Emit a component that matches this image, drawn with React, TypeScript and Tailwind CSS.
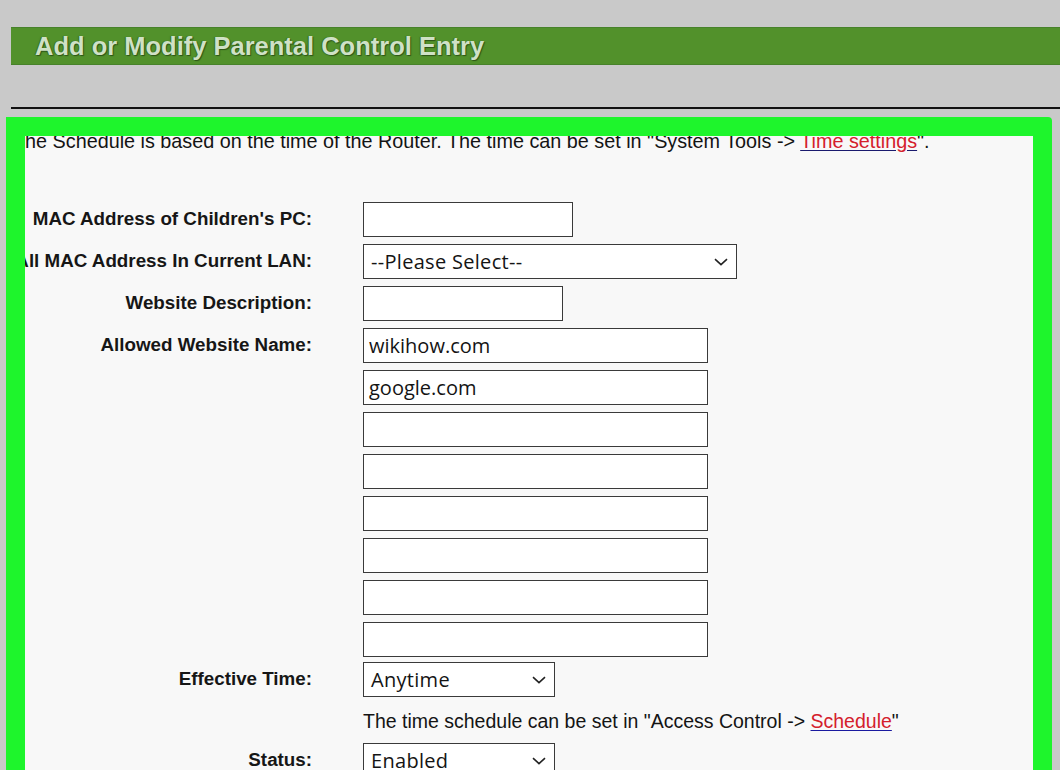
import React from "react";

const LABEL = "font-['Liberation_Sans',Arial,sans-serif] font-bold text-[18.8px] text-[#161616] whitespace-nowrap";
const FIELD = "font-['Open_Sans','Noto_Sans',sans-serif] text-[20px] text-[#141414]";

const ALLOWED_SITES = ["wikihow.com", "google.com", "", "", "", "", "", ""];

function Chevron() {
  return (
    <svg width="14" height="8" viewBox="0 0 14 8" className="shrink-0">
      <path d="M1 1.2 L7 6.6 L13 1.2" fill="none" stroke="#222" strokeWidth="1.6" />
    </svg>
  );
}

function TextBox({ width, value = "" }: { width: string; value?: string }) {
  return (
    <div className={`${width} h-[35px] border border-[#3a3a3a] bg-white flex items-center pl-[5px] ${FIELD}`}>
      {value}
    </div>
  );
}

function DropDown({ width, value }: { width: string; value: string }) {
  return (
    <div className={`${width} h-[35px] border border-[#3a3a3a] bg-white flex items-center justify-between pl-[7px] pr-[8px] ${FIELD}`}>
      <span className="tracking-[0.3px]">{value}</span>
      <Chevron />
    </div>
  );
}

function Row({ label, className = "", children }: { label?: string; className?: string; children: React.ReactNode }) {
  return (
    <div className={`flex items-start gap-x-[51px] ${className}`}>
      <div className={`w-[287px] h-[35px] flex items-center justify-end ${LABEL}`}>{label}</div>
      <div className="flex flex-col gap-y-[7px]">{children}</div>
    </div>
  );
}

export default function App() {
  return (
    <div className="h-screen bg-[#c9c9c9] overflow-hidden">
      {/* page title bar */}
      <div className="pt-[27px] pl-[11px]">
        <div className="h-[38px] bg-[#52912b] border-y border-[#47822a] flex items-center pl-[24px]">
          <h1 className="font-['Liberation_Sans',Arial,sans-serif] font-bold text-[25.5px] text-[#cfe1c6] [text-shadow:1px_1px_1px_#2c5416,-1px_0_1px_#3a6d20]">
            Add or Modify Parental Control Entry
          </h1>
        </div>
      </div>

      <div className="ml-[11px] mt-[42px] h-[2px] bg-[#111]" />

      {/* highlighted form panel */}
      <div className="ml-[6px] mt-[8px] w-[1046px] h-[700px] border-[19px] border-[#1ef52c] rounded-tr-[4px] bg-[#f8f8f8] overflow-hidden">
        <p className="-mt-[6px] -ml-[12px] whitespace-nowrap leading-[22px] font-['Liberation_Sans',Arial,sans-serif] text-[19.8px] text-[#141414]">
          The Schedule is based on the time of the Router. The time can be set in "System Tools -&gt;{" "}
          <span className="text-[#d4202c] underline decoration-[#1a1a6e] underline-offset-2">Time settings</span>".
        </p>

        <div className="mt-[50px] flex flex-col gap-y-[7px]">
          <Row label="MAC Address of Children's PC:">
            <TextBox width="w-[210px]" />
          </Row>
          <Row label="All MAC Address In Current LAN:">
            <DropDown width="w-[374px]" value="--Please Select--" />
          </Row>
          <Row label="Website Description:">
            <TextBox width="w-[200px]" />
          </Row>
          <Row label="Allowed Website Name:">
            {ALLOWED_SITES.map((site, i) => (
              <TextBox key={i} width="w-[345px]" value={site} />
            ))}
          </Row>
          <Row label="Effective Time:" className="-mt-[2px]">
            <DropDown width="w-[192px]" value="Anytime" />
          </Row>
          <div className="flex gap-x-[51px] h-[32px]">
            <div className="w-[287px]" />
            <div className="pt-[3px] font-['Liberation_Sans',Arial,sans-serif] text-[19.5px] text-[#141414] whitespace-nowrap">
              The time schedule can be set in "Access Control -&gt;{" "}
              <span className="text-[#d4202c] underline decoration-[#1a1aa0] underline-offset-2">Schedule</span>"
            </div>
          </div>
          <Row label="Status:">
            <DropDown width="w-[192px]" value="Enabled" />
          </Row>
        </div>
      </div>
    </div>
  );
}
